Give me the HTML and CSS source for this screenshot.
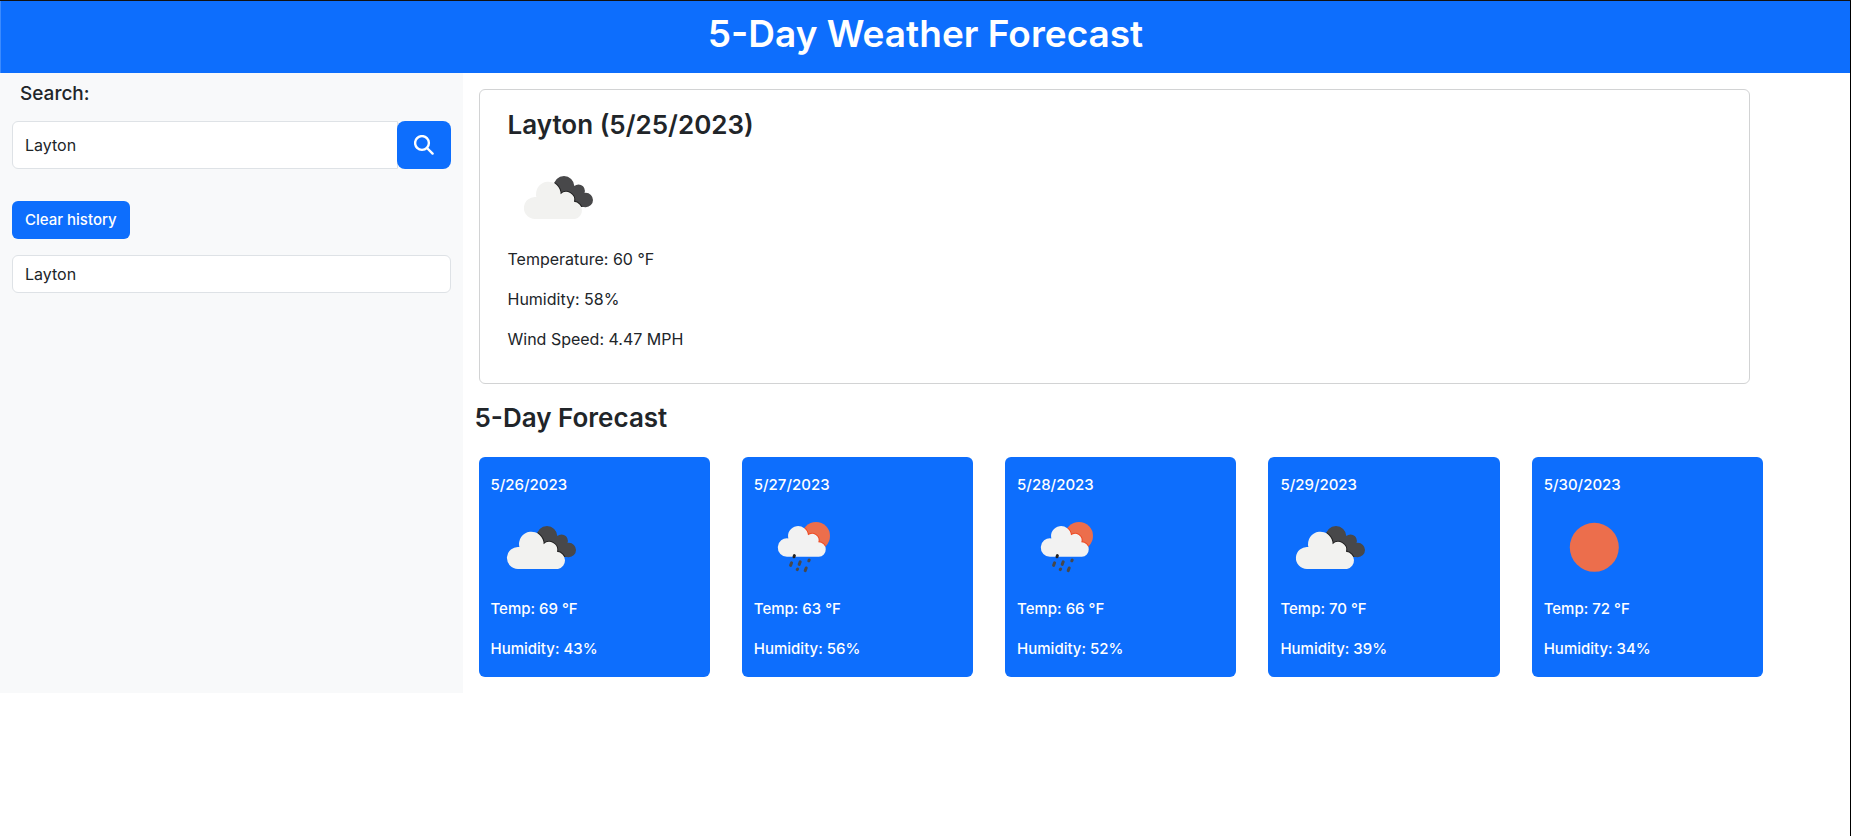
FILE: index.html
```html
<!DOCTYPE html>
<html lang="en">
<head>
<meta charset="utf-8">
<meta name="viewport" content="width=device-width, initial-scale=1">
<title>5-Day Weather Forecast</title>
<link rel="stylesheet" href="styles.css">
</head>
<body>
<svg class="sprite" aria-hidden="true">
  <defs>
    <clipPath id="dark-clip">
      <circle cx="56" cy="39.3" r="10.3"/><circle cx="70.5" cy="43.8" r="6.4"/><circle cx="77.8" cy="53" r="7.2"/><path d="M56 39L70 41L78 50L77 60L60 60L50 46Z"/>
    </clipPath>
    <clipPath id="sun-clip"><circle cx="62" cy="39" r="14"/></clipPath>
    <path id="big-cloud" d="M27 72A11 11 0 1 1 28.4 50.1A12.3 12.3 0 1 1 52.6 47.3A8 8 0 0 1 66 54.8A8.7 8.7 0 0 1 67 72Z"/>
    <path id="small-cloud" d="M33.2 59.7A9.2 9.2 0 1 1 34.3 41.4A10 10 0 1 1 54 38.3A6.5 6.5 0 0 1 64.3 45.3A7.2 7.2 0 0 1 64.8 59.7Z"/>
    <symbol id="cloudy" viewBox="0 0 100 100">
      <g clip-path="url(#dark-clip)">
        <rect width="100" height="100" fill="#48484a"/>
        <use href="#big-cloud" fill="none" stroke="#222" stroke-width="2"/>
      </g>
      <use href="#big-cloud" fill="#f2f2f0"/>
    </symbol>
    <symbol id="rain" viewBox="0 0 100 100">
      <circle cx="62" cy="39" r="14" fill="#ec6e4c"/>
      <use href="#small-cloud" fill="none" stroke="#ee4b25" stroke-width="2" clip-path="url(#sun-clip)"/>
      <use href="#small-cloud" fill="#f2f2f2"/>
      <g stroke="#48484a" stroke-width="3" stroke-linecap="round">
        <path d="M37.6 65.8L36.6 68.4M46.2 64.8L45.2 67.4M52.2 71L51.2 73.6M55.2 63L54.8 63.8M43.6 72L43.2 72.6"/>
        <path d="M40.4 58.6L40 59.8" stroke="#222"/>
      </g>
    </symbol>
    <symbol id="sunny" viewBox="0 0 100 100"><circle cx="50.3" cy="50.3" r="24.5" fill="#ec6e4c"/></symbol>
  </defs>
</svg>
<header class="banner"><h1>5-Day Weather Forecast</h1></header>
<div class="layout">
  <aside class="sidebar">
    <form class="search">
      <label class="search-label" for="city">Search:</label>
      <div class="search-group">
        <input class="search-input" id="city" type="text" value="Layton">
        <button class="search-button" type="button" aria-label="Search">
          <svg width="20" height="20" viewBox="0 0 20 20" fill="none" stroke="currentColor" stroke-width="2.4" stroke-linecap="round"><circle cx="8" cy="8" r="6.9"/><path d="M13 13L18.6 18.6"/></svg>
        </button>
      </div>
    </form>
    <button class="clear-button" type="button">Clear history</button>
    <input class="history-item" type="text" value="Layton" readonly aria-label="Past search">
  </aside>
  <main class="main">
    <section class="current">
      <h2>Layton (5/25/2023)</h2>
      <svg class="weather-icon"><use href="#cloudy"/></svg>
      <p>Temperature: 60 °F</p>
      <p>Humidity: 58%</p>
      <p>Wind Speed: 4.47 MPH</p>
    </section>
    <h2 class="forecast-title">5-Day Forecast</h2>
    <section class="forecast">
      <article class="day"><h3>5/26/2023</h3><svg class="weather-icon"><use href="#cloudy"/></svg><p>Temp: 69 °F</p><p>Humidity: 43%</p></article>
      <article class="day"><h3>5/27/2023</h3><svg class="weather-icon"><use href="#rain"/></svg><p>Temp: 63 °F</p><p>Humidity: 56%</p></article>
      <article class="day"><h3>5/28/2023</h3><svg class="weather-icon"><use href="#rain"/></svg><p>Temp: 66 °F</p><p>Humidity: 52%</p></article>
      <article class="day"><h3>5/29/2023</h3><svg class="weather-icon"><use href="#cloudy"/></svg><p>Temp: 70 °F</p><p>Humidity: 39%</p></article>
      <article class="day"><h3>5/30/2023</h3><svg class="weather-icon"><use href="#sunny"/></svg><p>Temp: 72 °F</p><p>Humidity: 34%</p></article>
    </section>
  </main>
</div>
</body>
</html>
```
FILE: styles.css
```css
* { box-sizing: border-box; }

body {
  margin: 0;
  min-height: 100vh;
  border-top: 1px solid #111;
  border-right: 1px solid #000;
  background: #fff;
  color: #212529;
  font: 400 16px/24px Inter, "Liberation Sans", sans-serif;
}

h1, h2, h3, p { margin: 0; }
h1 { font-size: 37px; font-weight: 600; line-height: 48px; }
h2 { font-size: 26px; font-weight: 600; line-height: 33px; }

input, button { font: inherit; color: inherit; }

.sprite { position: absolute; width: 0; height: 0; }

.banner {
  padding: 9px 8px 15px;
  border-left: 1px solid #3d8bfd;
  background: #0d6efd;
  color: #fff;
  text-align: center;
}

.layout { display: grid; grid-template-columns: 25% 1fr; }

.sidebar {
  display: flex;
  flex-direction: column;
  align-items: flex-start;
  gap: 16px;
  padding: 9px 12px;
  background: #f8f9fa;
}

.search { width: 100%; margin-bottom: 16px; }

.search-label {
  display: block;
  margin-bottom: 15px;
  padding-left: 8px;
  font-size: 19px;
  font-weight: 500;
}

.search-group { display: flex; height: 48px; }

.search-input, .history-item {
  min-width: 0;
  padding: 6px 12px;
  border: 1px solid #dee2e6;
  border-radius: 6px;
  background: #fff;
}

.search-input { flex: 1; border-radius: 6px 0 0 6px; }
.history-item { width: 100%; height: 38px; }

.search-button, .clear-button {
  border: 0;
  border-radius: 6px;
  background: #0d6efd;
  color: #fff;
}

.search-button {
  display: grid;
  place-items: center;
  width: 54px;
  margin-left: -1px;
  border-radius: 8px;
}

.clear-button { height: 38px; padding: 0 13px; font-size: 15px; font-weight: 500; }

.main { padding: 16px 87px 16px 16px; }

.current {
  margin-right: 13px;
  padding: 18px 28px 0;
  border: 1px solid #d2d3d4;
  border-radius: 6px;
}

.current h2 { margin-bottom: 6px; }
.current p { margin-bottom: 16px; }
.current p:last-child { margin-bottom: 32px; }

.weather-icon { display: block; width: 100px; height: 100px; }

.forecast-title { margin: 17px 0 23px -4px; }

.forecast { display: grid; grid-template-columns: repeat(5, 1fr); gap: 32px; }

.day {
  padding: 16px 12px 0;
  border-radius: 6px;
  background: #0d6efd;
  color: #fff;
  font-size: 15px;
  font-weight: 500;
}

.day h3 { font-size: 15px; font-weight: 500; }
.day p { margin-bottom: 16px; }
```
